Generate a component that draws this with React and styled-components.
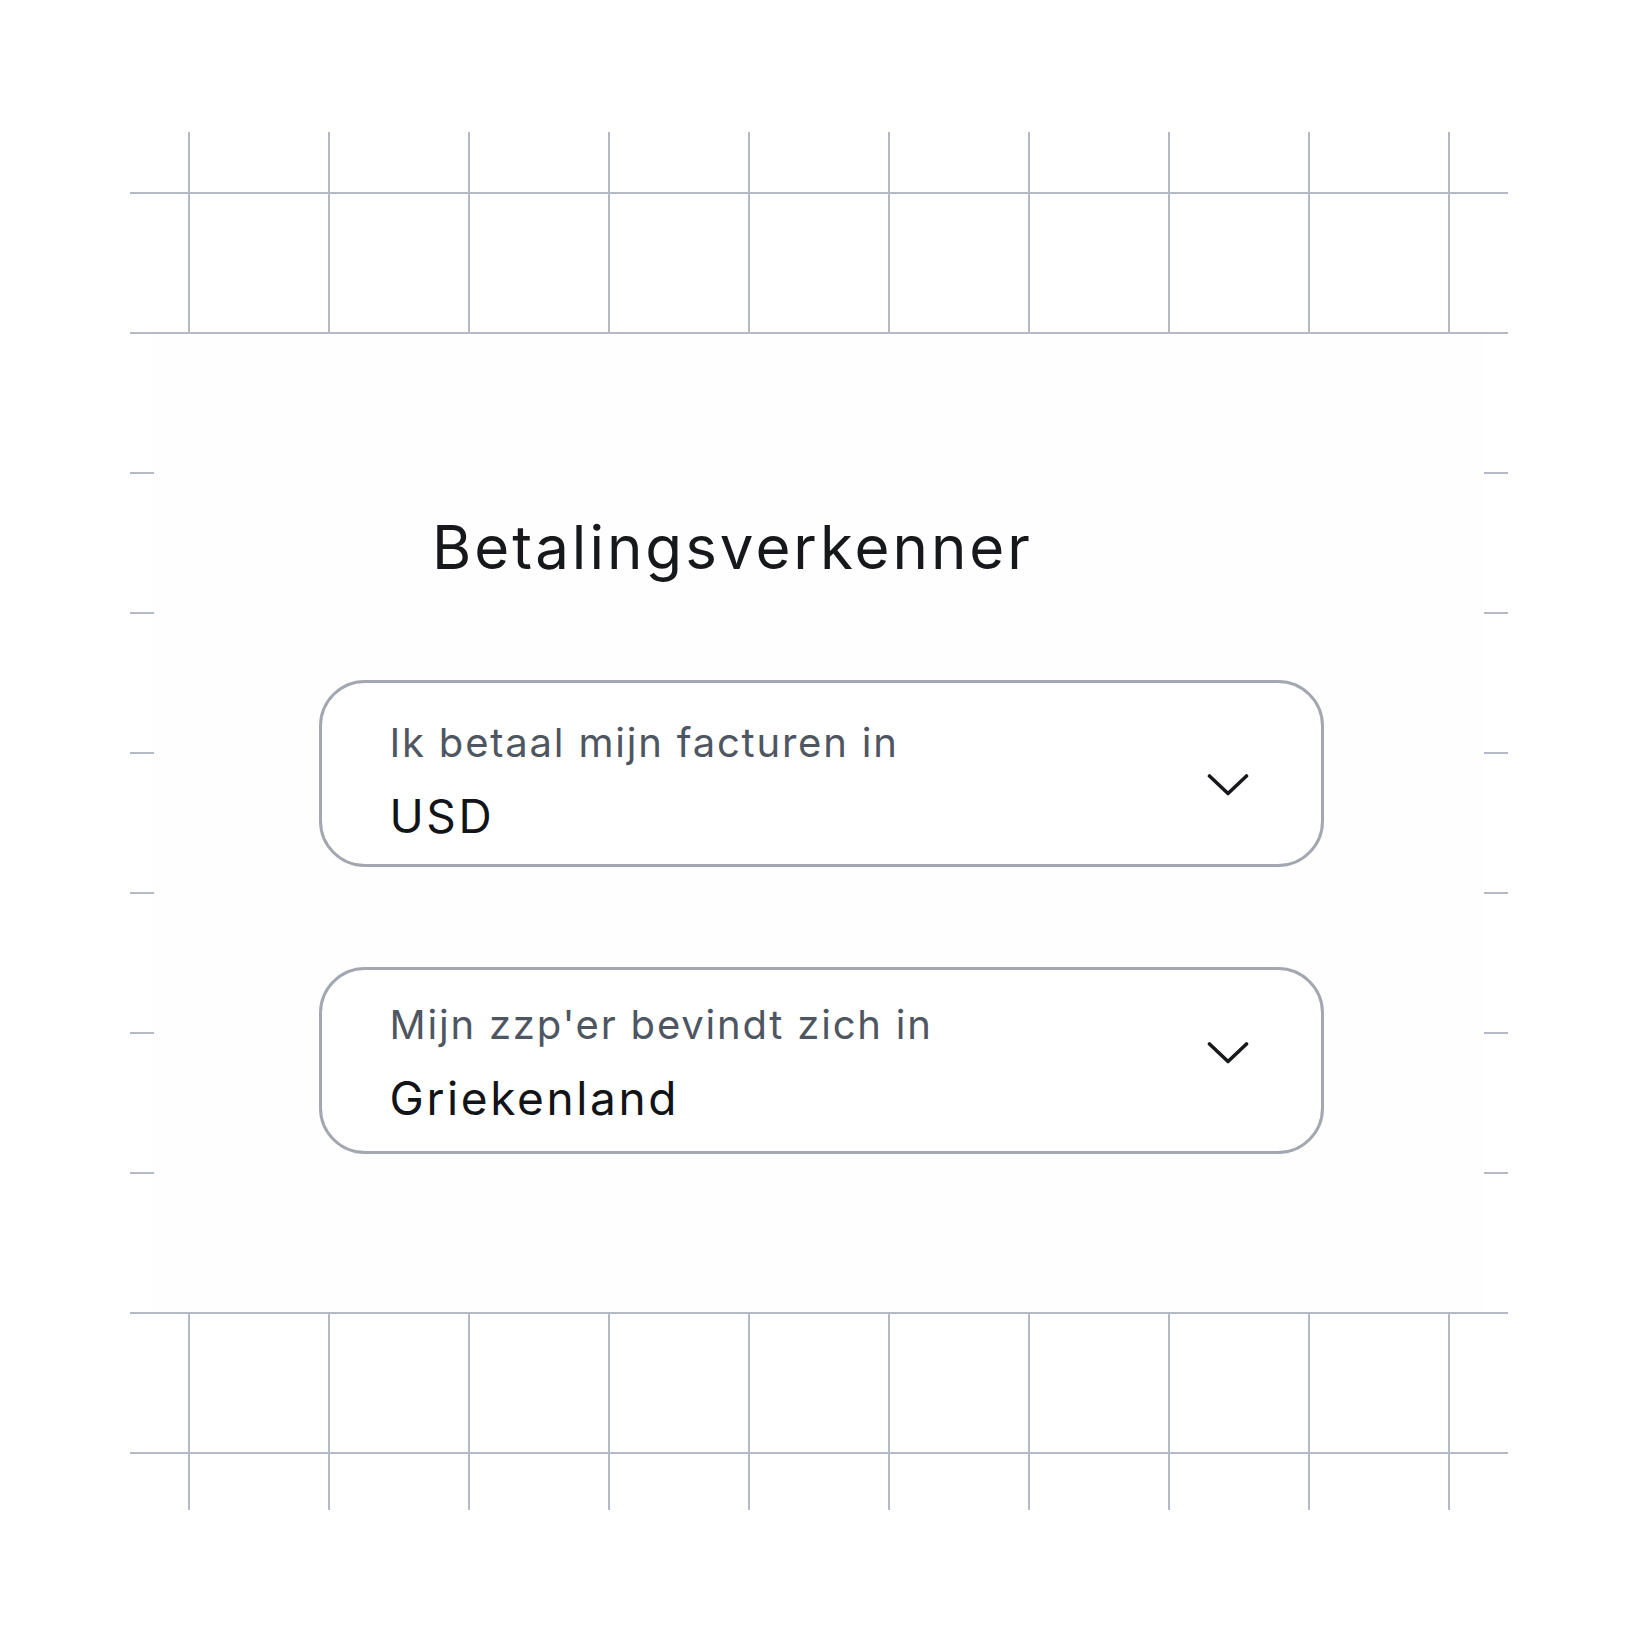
import React from "react";
import styled, { createGlobalStyle } from "styled-components";

const GlobalStyle = createGlobalStyle`
  html, body {
    margin: 0;
    padding: 0;
    background: #ffffff;
  }
  body {
    font-family: Inter, "Noto Sans", "Liberation Sans", sans-serif;
    -webkit-font-smoothing: antialiased;
  }
`;

const LINE = "#b3bac6";

const fields = [
  { label: "Ik betaal mijn facturen in", value: "USD", top: 40, chevronShift: 11 },
  { label: "Mijn zzp'er bevindt zich in", value: "Griekenland", top: 35, chevronShift: -8 }
];

export default function App() {
  return (
    <>
      <GlobalStyle />
      <Page>
        <Canvas>
          <Panel>
            <Title>Betalingsverkenner</Title>
            <Fields>
              {fields.map(f => (
                <Select key={f.value} {...f} />
              ))}
            </Fields>
          </Panel>
        </Canvas>
      </Page>
    </>
  );
}

const Select = ({ label, value, top, chevronShift }) => (
  <SelectBox $top={top}>
    <SelectText>
      <Label>{label}</Label>
      <Value>{value}</Value>
    </SelectText>
    <Chevron top={top} shift={chevronShift} />
  </SelectBox>
);

const Chevron = ({ top, shift }) => (
  <ChevronWrap $top={top} $shift={shift}>
    <svg width="42" height="24" viewBox="0 0 42 24" fill="none">
      <path
        d="M2.5 3 L21 20.5 L39.5 3"
        stroke="#17191c"
        strokeWidth="3.6"
        strokeLinecap="round"
        strokeLinejoin="round"
      />
    </svg>
  </ChevronWrap>
);

const Page = styled.div`
  width: 1640px;
  height: 1640px;
  padding: 132px 0 0 130px;
  box-sizing: border-box;
`;

// grid paper: vertical lines every 140px, horizontal every 140px
const Canvas = styled.div`
  width: 1378px;
  height: 1378px;
  box-sizing: border-box;
  padding: 202px 24px 198px;
  display: flex;
  background-image:
    linear-gradient(to right, ${LINE} 1.6px, transparent 1.6px),
    linear-gradient(to bottom, ${LINE} 1.6px, transparent 1.6px);
  background-size: 140px 100%, 100% 140px;
  background-position: 58px 0, 0 60px;
`;

const Panel = styled.div`
  flex: 1;
  background: #fefefe;
  display: flex;
  flex-direction: column;
  padding-top: 183px;
`;

const Title = styled.h1`
  margin: 0 0 0 278px;
  font-family: Inter, "Noto Sans", sans-serif;
  font-weight: 400;
  font-size: 60px;
  line-height: 60px;
  letter-spacing: 3px;
  color: #16181b;
`;

const Fields = styled.div`
  display: flex;
  flex-direction: column;
  align-items: center;
  gap: 100px;
  margin-top: 103px;
  padding-left: 4px;
`;

const SelectBox = styled.div`
  width: 1005px;
  height: 187px;
  box-sizing: border-box;
  border: 3px solid #a3a8b0;
  border-radius: 46px;
  background: #ffffff;
  display: flex;
  align-items: flex-start;
  padding: ${p => p.$top}px 72px 0 68px;
`;

const SelectText = styled.div`
  flex: 1;
  display: flex;
  flex-direction: column;
  gap: 30px;
`;

const Label = styled.div`
  font-size: 40px;
  line-height: 40px;
  color: #4e5661;
  letter-spacing: 1.8px;
`;

const Value = styled.div`
  font-size: 46px;
  line-height: 46px;
  color: #121417;
  letter-spacing: 2.6px;
`;

const ChevronWrap = styled.div`
  display: flex;
  align-self: center;
  margin-top: -${p => p.$top}px;
  transform: translateY(${p => p.$shift}px);
`;
